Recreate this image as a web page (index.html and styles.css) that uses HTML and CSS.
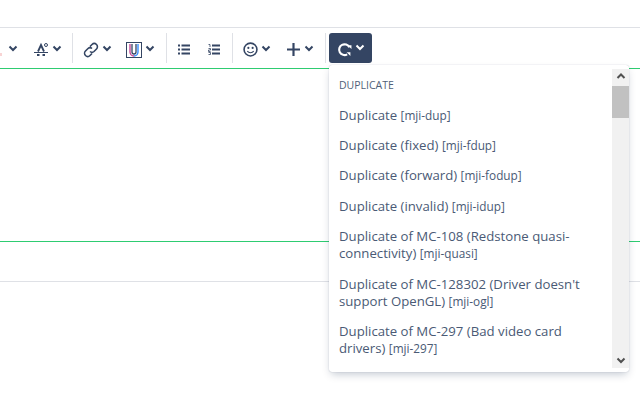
FILE: index.html
```html
<!DOCTYPE html>
<html lang="en">
<head>
<meta charset="utf-8">
<title>Editor</title>
<link rel="stylesheet" href="styles.css">
</head>
<body>
<div class="page">
  <div class="toolbar">
    <div class="group group-first">
      <span class="tool tool-cut"><span class="speck"></span><svg class="chev" viewBox="0 0 10 7"><path d="M1.5 1.5 5 5l3.5-3.500"/></svg></span>
      <span class="tool">
        <svg class="ico" viewBox="0 0 16 16"><path class="thin" d="M1 10.5h14"/><path class="thick" d="M5 9.500 8 3l3 6.500M4 13h2.500M9.500 13H12"/><circle class="thin" cx="13" cy="3" r="1.500"/></svg>
        <svg class="chev" viewBox="0 0 10 7"><path d="M1.5 1.5 5 5l3.500-3.500"/></svg>
      </span>
    </div>
    <div class="group">
      <span class="tool">
        <svg class="ico" viewBox="0 0 16 16"><path class="link" d="M7 4.500l2-2a3 3 0 0 1 4.500 4.500l-2.500 2.500a3 3 0 0 1-4 0M9 11.500l-2 2a3 3 0 0 1-4.500-4.500L5 6.500a3 3 0 0 1 4 0"/></svg>
        <svg class="chev" viewBox="0 0 10 7"><path d="M1.5 1.500 5 5l3.500-3.500"/></svg>
      </span>
      <span class="tool">
        <svg class="ico" viewBox="0 0 16 16"><rect class="thin" x="0.5" y="0.5" width="15" height="15"/><path class="clip-p" d="M4 2v8a4 4 0 0 0 4 4"/><path class="clip-b" d="M8 14a4 4 0 0 0 4-4V2"/><path class="clip-r" d="M6 2v8a2 2 0 0 0 4 0V2"/></svg>
        <svg class="chev" viewBox="0 0 10 7"><path d="M1.5 1.500 5 5l3.500-3.500"/></svg>
      </span>
    </div>
    <div class="group group-list">
      <span class="tool tool-list">
        <svg class="ico ico-list" viewBox="0 0 12 11"><path class="bars" d="M3.500 1.500H12M3.500 5.500H12M3.500 9.500H12M0 1.500h2M0 5.500h2M0 9.500h2"/></svg>
      </span>
      <span class="tool tool-list">
        <svg class="ico ico-list" viewBox="0 0 12 11"><path class="bars" d="M4 1.500h8M4 5.500h8M4 9.500h8"/><path class="tiny" d="M.5.5h1.500V3M.5 4.500h2V6h-2v1.500h2M.5 8.500h2v2h-2"/></svg>
      </span>
    </div>
    <div class="group group-insert">
      <span class="tool">
        <svg class="ico ico-smile" viewBox="0 0 14 14"><circle class="round" cx="7" cy="7" r="6"/><circle class="dot" cx="5" cy="5.500" r="1"/><circle class="dot" cx="9" cy="5.500" r="1"/><path class="thin" d="M4 8.500c1.500 2 4.500 2 6 0"/></svg>
        <svg class="chev" viewBox="0 0 10 7"><path d="M1.5 1.500 5 5l3.500-3.500"/></svg>
      </span>
      <span class="tool tool-plus">
        <svg class="ico ico-plus" viewBox="0 0 12 12"><path class="bars" d="M0 6h12M6 0v12"/></svg>
        <svg class="chev" viewBox="0 0 10 7"><path d="M1.5 1.500 5 5l3.500-3.500"/></svg>
      </span>
    </div>
    <div class="group group-last">
      <span class="tool tool-active">
        <svg class="ico ico-dup" viewBox="0 0 14 14"><path class="dup" d="M11.500 5A5 5 0 1 0 9.500 11.500"/><path class="dup-fill" d="M10 3h3.500v3.500zM9 9.500h3.500V13z"/></svg>
        <svg class="chev chev-light" viewBox="0 0 10 7"><path d="M1.5 1.500 5 5l3.500-3.500"/></svg>
      </span>
    </div>
  </div>
  <div class="editor"></div>
  <div class="strip"></div>

  <div class="menu">
    <div class="menu-list">
      <div class="menu-head">DUPLICATE</div>
      <div class="menu-item">Duplicate <span class="code">[mji-dup]</span></div>
      <div class="menu-item">Duplicate (fixed) <span class="code">[mji-fdup]</span></div>
      <div class="menu-item">Duplicate (forward) <span class="code">[mji-fodup]</span></div>
      <div class="menu-item">Duplicate (invalid) <span class="code">[mji-idup]</span></div>
      <div class="menu-item">Duplicate of MC-108 (Redstone quasi-connectivity) <span class="code">[mji-quasi]</span></div>
      <div class="menu-item">Duplicate of MC-128302 (Driver doesn't support OpenGL) <span class="code">[mji-ogl]</span></div>
      <div class="menu-item">Duplicate of MC-297 (Bad video card drivers) <span class="code">[mji-297]</span></div>
    </div>
    <div class="scrollbar">
      <svg class="scroll-arrow" viewBox="0 0 10 7"><path d="M1.5 5 5 1.500 8.500 5"/></svg>
      <div class="scroll-track"><div class="scroll-thumb"></div></div>
      <svg class="scroll-arrow" viewBox="0 0 10 7"><path d="M1.5 1.500 5 5l3.500-3.500"/></svg>
    </div>
  </div>
</div>
</body>
</html>
```
FILE: styles.css
```css
* { box-sizing: border-box; }
html, body { margin: 0; padding: 0; background: #fff; }
body { width: 640px; height: 400px; overflow: hidden; font-family: "Open Sans", "Liberation Sans", sans-serif; }
.page { position: relative; width: 640px; height: 400px; padding-top: 27px; }

.toolbar {
  display: flex;
  align-items: center;
  height: 42px;
  border-top: 1px solid #dfe1e6;
  border-bottom: 1px solid #2ecc71;
}
.group { display: flex; align-items: center; height: 30px; padding: 0 4px 0 3px; border-right: 1px solid #dfe1e6; }
.group-first { padding: 0 3px 0 0; }
.group-list { padding: 0 5px 0 4px; }
.group-insert { padding: 0 4px 0 3px; }
.group-last { border-right: 0; padding: 0 0 0 3px; }

.tool { display: flex; align-items: center; gap: 3px; height: 30px; padding: 3px 7px 0; }
.tool-cut { width: 26px; justify-content: space-between; padding: 3px 8px 0 0; }
.tool-list + .tool-list { margin-left: 4px; }
.tool-plus { margin-left: 2px; gap: 4px; }
.tool-active { background: #344563; border-radius: 3px; padding: 2px 7px 0 8px; }
.speck { width: 2px; height: 3px; background: #f8d4d4; margin-top: 9px; }

.ico { width: 16px; height: 16px; fill: none; stroke: #344563; display: block; }
.ico-list { width: 12px; height: 11px; }
.ico-smile { width: 15px; height: 15px; }
.ico-plus { width: 13px; height: 13px; }
.ico-dup { width: 15px; height: 15px; }
.chev { width: 10px; height: 7px; fill: none; stroke: #344563; stroke-width: 2; display: block; margin-bottom: 3px; }
.chev-light { stroke: #fff; }
.thin { stroke-width: 1; }
.tiny { stroke-width: .8; }
.thick { stroke-width: 1.8; }
.link { stroke-width: 1.6; }
.round { stroke-width: 1.5; }
.bars { stroke-width: 2; }
.dot { fill: #344563; stroke: none; }
.clip-p { stroke: #c0398f; stroke-width: 1.3; }
.clip-b { stroke: #2684ff; stroke-width: 1.3; }
.clip-r { stroke: #344563; stroke-width: 1.3; }
.dup { stroke: #fff; stroke-width: 2; }
.dup-fill { fill: #fff; stroke: none; }

.editor { height: 173px; border-bottom: 1px solid #2ecc71; }
.strip { height: 40px; border-bottom: 1px solid #dfe1e6; }

.menu {
  position: absolute;
  left: 329px;
  top: 65px;
  width: 300px;
  height: 307px;
  padding: 4px 0;
  display: flex;
  background: #fff;
  border-radius: 3px;
  box-shadow: 0 4px 8px -2px rgba(9,30,66,.25), 0 0 1px rgba(9,30,66,.31);
}
.menu-list { flex: 1; min-width: 0; padding: 0 10px; overflow: hidden; color: #4a5a75; }
.menu-head { font-size: 10.5px; line-height: 14px; padding-top: 9px; height: 31px; color: #505f79; }
.menu-item { font-size: 13.2px; line-height: 17px; padding: 6.7px 0; }
.code { font-size: 11.8px; }

.scrollbar { width: 17px; height: 100%; display: flex; flex-direction: column; background: #f1f1f1; align-items: center; }
.scroll-arrow { width: 10px; height: 7px; fill: none; stroke: #505050; stroke-width: 2; margin: 4px 0; flex: none; }
.scroll-track { flex: 1; width: 100%; padding-top: 2px; }
.scroll-thumb { width: 100%; height: 32px; background: #c1c1c1; }
```
